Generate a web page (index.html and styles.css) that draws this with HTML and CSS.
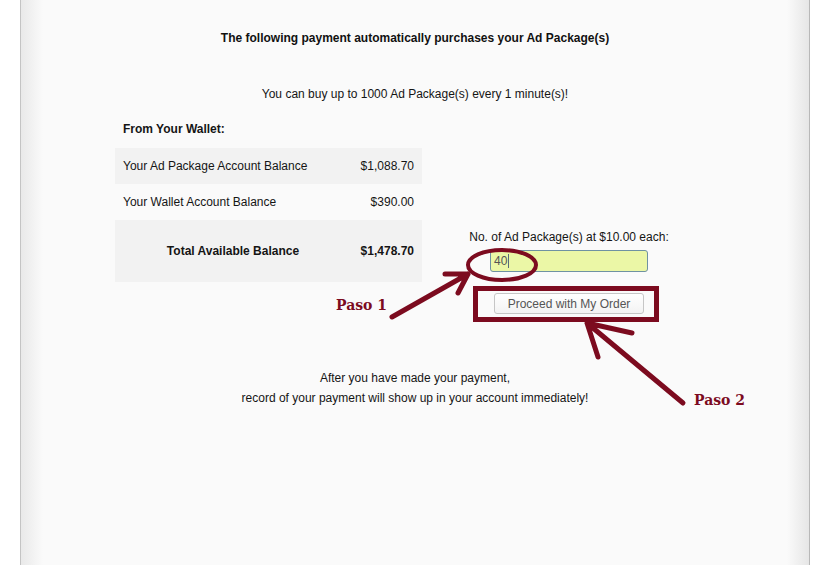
FILE: index.html
```html
<!DOCTYPE html>
<html>
<head>
<meta charset="utf-8">
<link rel="stylesheet" href="styles.css">
</head>
<body>
<div class="panel">
  <h1 class="title">The following payment automatically purchases your Ad Package(s)</h1>
  <p class="limit">You can buy up to 1000 Ad Package(s) every 1 minute(s)!</p>
  <div class="purchase">
    <div class="wallet">
      <div class="wallet-head">From Your Wallet:</div>
      <div class="row shaded"><span class="label">Your Ad Package Account Balance</span><span class="amt">$1,088.70</span></div>
      <div class="row"><span class="label">Your Wallet Account Balance</span><span class="amt">$390.00</span></div>
      <div class="row total shaded"><span class="label">Total Available Balance</span><span class="amt">$1,478.70</span></div>
    </div>
    <div class="order">
      <div class="order-label">No. of Ad Package(s) at $10.00 each:</div>
      <div class="qty"><span class="qty-val">40</span><span class="caret"></span></div>
      <button class="proceed">Proceed with My Order</button>
    </div>
  </div>
  <div class="note">
    <div>After you have made your payment,</div>
    <div>record of your payment will show up in your account immediately!</div>
  </div>
</div>
<div class="annot">
  <svg class="marks" width="835" height="565" viewBox="0 0 835 565">
    <g fill="none" stroke="#7c0b1f" stroke-linecap="round" stroke-linejoin="round">
      <ellipse cx="502" cy="265" rx="34" ry="15" stroke-width="4"/>
      <rect x="475.5" y="288.5" width="181" height="31" stroke-width="5" stroke-linecap="butt" stroke-linejoin="miter"/>
      <path d="M392 317 L468 274 M445 274 L468 274 L458 293" stroke-width="5"/>
      <path d="M683 403 L587 323 M632 333 L587 323 L598 357" stroke-width="5"/>
    </g>
  </svg>
  <span class="paso paso1">Paso 1</span>
  <span class="paso paso2">Paso 2</span>
</div>
</body>
</html>
```
FILE: styles.css
```css
html, body {
  margin: 0;
  padding: 0;
  background: #ffffff;
}
body {
  font-family: "Liberation Sans", Arial, sans-serif;
  font-size: 12px;
  color: #151515;
  width: 835px;
  height: 565px;
  overflow: hidden;
  position: relative;
}
.panel {
  margin-left: 20px;
  width: 790px;
  height: 565px;
  border-left: 1px solid #c4c4c4;
  border-right: 1px solid #b8b8b8;
  background:
    linear-gradient(to right, #e9e9e9 0px, #fafafa 22px, #fafafa 766px, #e4e4e4 790px);
  padding-top: 30px;
  box-sizing: border-box;
}
.title {
  margin: 0;
  font-size: 12px;
  font-weight: bold;
  line-height: 16px;
  text-align: center;
  color: #111;
}
.limit {
  margin: 40px 0 0;
  line-height: 16px;
  text-align: center;
}
.purchase {
  display: flex;
  margin-top: 18px;
  padding-left: 94px;
}
.wallet {
  width: 307px;
}
.wallet-head {
  font-weight: bold;
  line-height: 18px;
  padding-left: 8px;
  margin-bottom: 10px;
}
.row {
  display: flex;
  align-items: center;
  height: 36px;
}
.row.shaded {
  background: #f2f2f2;
}
.row .label {
  flex: 1;
  padding-left: 8px;
}
.row .amt {
  padding-right: 8px;
  text-align: right;
}
.row.total {
  height: 62px;
  font-weight: bold;
}
.row.total .label {
  flex: 0 0 236px;
  padding-left: 0;
  text-align: center;
}
.row.total .amt {
  flex: 1;
}
.order {
  margin-left: 46px;
  width: 202px;
  padding-top: 109px;
  display: flex;
  flex-direction: column;
  align-items: center;
}
.order-label {
  line-height: 16px;
  white-space: nowrap;
}
.qty {
  margin-top: 5px;
  width: 158px;
  height: 22px;
  box-sizing: border-box;
  border: 1px solid #6f92a2;
  border-radius: 3px;
  background: #ebf7a6;
  display: flex;
  align-items: center;
  padding-left: 3px;
  color: #555;
}
.qty-val {
  line-height: 14px;
}
.caret {
  display: inline-block;
  width: 1px;
  height: 14px;
  background: #5a6b7a;
  margin-left: 1px;
}
.proceed {
  margin-top: 21px;
  width: 150px;
  height: 21px;
  box-sizing: border-box;
  border: 1px solid #c6c6c6;
  border-radius: 3px;
  background: linear-gradient(#ffffff, #f3f3f3);
  font-family: "Liberation Sans", Arial, sans-serif;
  font-size: 12px;
  color: #555;
  padding: 0;
}
.note {
  margin-top: 54px;
  text-align: center;
  line-height: 20px;
}
.annot {
  position: absolute;
  left: 0;
  top: 0;
  width: 835px;
  height: 565px;
  pointer-events: none;
}
.marks {
  position: absolute;
  left: 0;
  top: 0;
}
.paso {
  position: absolute;
  font-family: "DejaVu Serif", Georgia, serif;
  font-weight: bold;
  font-size: 14px;
  line-height: 16px;
  color: #7c0b1f;
}
.paso1 {
  left: 336px;
  top: 297px;
}
.paso2 {
  left: 694px;
  top: 392px;
}
```
